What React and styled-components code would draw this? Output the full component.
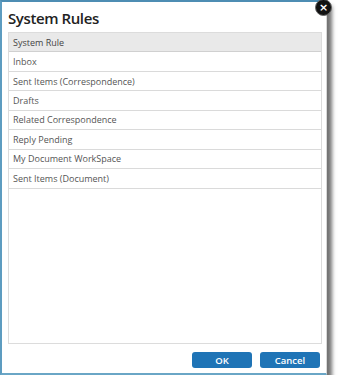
import React from "react";
import styled, { createGlobalStyle } from "styled-components";

const GlobalStyle = createGlobalStyle`
  html, body {
    margin: 0;
    padding: 0;
    background: #ffffff;
  }
  body {
    font-family: "Open Sans", "Liberation Sans", sans-serif;
  }
`;

const Dialog = styled.div`
  position: relative;
  box-sizing: border-box;
  width: 327px;
  height: 375px;
  background: #ffffff;
  border-top: 2px solid #4d8db3;
  border-left: 2px solid #5d9cc0;
  border-bottom: 2px solid #6aa6c6;
  border-right: 1px solid #d8d8d8;
  box-shadow: 5px 6px 4px rgba(40, 40, 40, 0.65);
  display: flex;
  flex-direction: column;
  padding: 0 4px 0 6px;
`;

const CloseButton = styled.div`
  position: absolute;
  top: -3px;
  right: -6px;
  width: 15px;
  height: 15px;
  border-radius: 50%;
  background: #111111;
  border: 1px solid #666;
  color: #ffffff;
  font-size: 11px;
  font-weight: bold;
  line-height: 15px;
  text-align: center;
  font-family: "DejaVu Sans", sans-serif;
`;

const Title = styled.h1`
  margin: 6px 0 4px 0;
  font-size: 15px;
  font-weight: 600;
  color: #222;
  line-height: 20px;
  letter-spacing: -0.4px;
`;

const ListBox = styled.div`
  flex: 1;
  border: 1px solid #dcdcdc;
  background: #fff;
`;

const Row = styled.div`
  box-sizing: border-box;
  height: 19.45px;
  display: flex;
  align-items: center;
  padding-left: 4px;
  font-size: 9px;
  color: ${(p) => (p.header ? "#444" : "#555")};
  background: ${(p) => (p.header ? "#e9e9e9" : "#ffffff")};
  border-bottom: 1px solid ${(p) => (p.header ? "#d0d0d0" : "#dadada")};
`;

const Footer = styled.div`
  display: flex;
  justify-content: flex-end;
  gap: 8px;
  padding: 8px 2px 5px 0;
`;

const Button = styled.button`
  width: 60px;
  height: 16px;
  border: none;
  border-radius: 3px;
  background: #1f74b6;
  color: #ffffff;
  font-family: "Open Sans", "Liberation Sans", sans-serif;
  font-size: 9.5px;
  font-weight: 600;
  padding: 0;
  cursor: pointer;
`;

const RULES = [
  "Inbox",
  "Sent Items (Correspondence)",
  "Drafts",
  "Related Correspondence",
  "Reply Pending",
  "My Document WorkSpace",
  "Sent Items (Document)",
];

const App = () => {
  return (
    <>
      <GlobalStyle />
      <Dialog>
        <CloseButton>×</CloseButton>
        <Title>System Rules</Title>
        <ListBox>
          <Row header>System Rule</Row>
          {RULES.map((rule) => (
            <Row key={rule}>{rule}</Row>
          ))}
        </ListBox>
        <Footer>
          <Button>OK</Button>
          <Button>Cancel</Button>
        </Footer>
      </Dialog>
    </>
  );
};

export default App;
